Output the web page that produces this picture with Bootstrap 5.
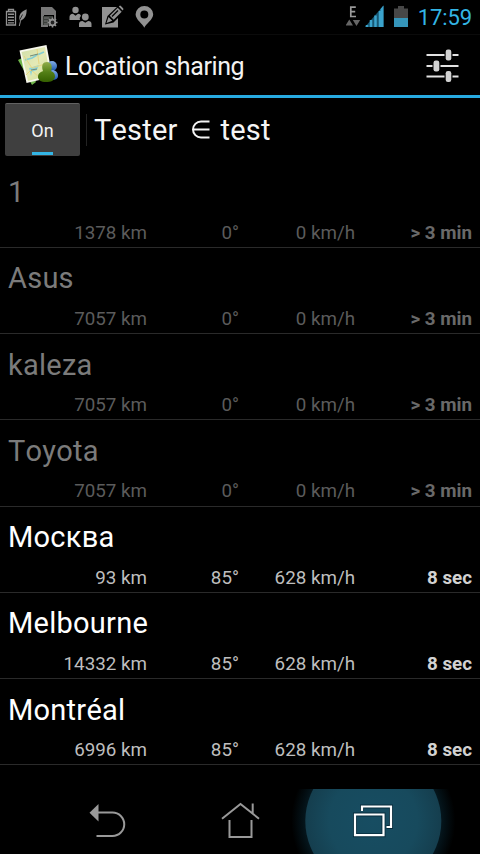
<!DOCTYPE html>
<html lang="en">
<head>
<meta charset="utf-8">
<meta name="viewport" content="width=device-width, initial-scale=1">
<title>Location sharing</title>
<link rel="stylesheet" href="https://cdn.jsdelivr.net/npm/bootstrap@5.3.0/dist/css/bootstrap.min.css">
<style>
body{background:#000;color:#f5f5f5;font-family:Roboto,"Noto Sans",sans-serif;height:854px;overflow:hidden;line-height:1;font-kerning:none}
svg{display:block;flex:none}
.status{height:35px;border-bottom:1px solid #0b0b0b}
.clock{color:#33b5e5;font-size:22px;line-height:35px;letter-spacing:-.1px}
.appbar{height:63px;border-bottom:3px solid #27aae1;padding:0 20px 0 15px}
.app-title{font-size:25px;line-height:60px;color:#f3f3f3;letter-spacing:-.4px;padding:3px 0 0 3px}
.group{height:63.6px;padding:5px 5px 5.600px}
.toggle{width:75px;height:53px;background:#3f3f3f;border:0;border-top:1px solid #626262;border-radius:2px;color:#f3f3f3;font-size:18px;line-height:51px;padding:0}
.toggle::after{content:"";display:block;width:21px;height:3px;background:#33b5e5;margin:-4px auto 0}
.rule{width:1px;height:32px;background:#232323;margin:0 7px 0 6px}
.group-name{font-size:29px;line-height:54px;white-space:pre;letter-spacing:.2px}
.person{height:86.25px;border-bottom:1px solid #2a2a2a;padding:13.500px 8px 0}
.person h2{font-size:29px;line-height:34px;font-weight:400;color:#fff;margin:0;letter-spacing:.25px}
.facts{display:grid;grid-template-columns:139px 92px 116px 117px;text-align:right;font-size:18.800px;line-height:22px;margin-top:12.500px;color:#bebebe}
.facts b{font-weight:700;color:#d2d2d2}
.stale h2{color:#7b7b7b}
.stale .facts{color:#5b5b5b}
.stale .facts b{color:#696969}
.sysnav{height:65px;margin-top:auto;overflow:hidden}
</style>
<script src="https://cdn.jsdelivr.net/npm/bootstrap@5.3.0/dist/js/bootstrap.bundle.min.js"></script>
</head>
<body class="d-flex flex-column">
<header class="status d-flex justify-content-between flex-shrink-0">
<svg width="160" height="34" viewBox="0 0 160 34" fill="#929292">
<path d="M6.500 11.500h9v13.500h-9zM8.500 9.500h5v2h-5z" fill="none" stroke="#929292" stroke-width="1.300"/>
<path d="M8 13.500h6v1.500H8zM8 16.500h6v1.500H8zM8 19.500h6v1.500H8zM8 22.300h6v1.200H8z"/>
<path d="M26.700 9.300c-6 2.400-8.500 6-7 11.200 5.500-1 6.800-5 7-11.200z"/><path d="M25 12c-3 4-4.500 8-5.700 14" fill="none" stroke="#929292"/>
<path d="M22.500 14.500l-2.500 5" stroke="#000" stroke-width=".7"/>
<path d="M41 7h11l4 4v8h-2v-4h-10v10h4v2h-7z" fill="#777"/><path d="M43 16h10v9H43z" fill="#3b3f3b"/><path d="M44 18h5M44 21h4M44 24h4" stroke="#777"/>
<circle cx="52.500" cy="22.500" r="2.800" fill="#222" stroke="#929292" stroke-width="1.800"/><path d="M52.500 17.500v2M52.500 25.500v2M47.500 22.500h2M55.500 22.500h2M49 19l1.500 1.500M54.500 24.500l1.500 1.500M49 26l1.500-1.500M54.500 20.500l1.500-1.500" stroke="#929292" stroke-width="1.600"/>
<circle cx="75.500" cy="10" r="3.200"/><path d="M69.500 20v-3q0-3 3.500-3.200l2.500 2 2.500-2q2.500 0 3 2-2 2-1 4.200z"/>
<circle cx="85.300" cy="17" r="3.400"/><path d="M79 27v-3q0-3 3.500-3l2.800 1.700 2.800-1.700q3.400 0 3.400 3v3z"/>
<path d="M102 7h16v20.500h-16z"/>
<path d="M105 24.500l2.500-8.500L119 5l6 6-11.500 11.500z" fill="#000"/>
<path d="M106.500 23l2-6 3.800 3.800zM109.700 15.700l8-8 4 4-8 8zM118.800 6.600l1.200-1.100q1 0 3.600 3.600l-1 1.500z"/>
<path d="M112 16.500l6-6" stroke="#000" stroke-width="1.200"/>
<path fill-rule="evenodd" d="M144.300 27.800c-1.500-4-8.700-8-8.700-13.500a8.800 8.300 0 0 1 17.600 0c0 5.500-7.400 9.500-8.900 13.500zm0-17.300a4 4 0 1 0 0 8 4 4 0 0 0 0-8z"/>
</svg>
<div class="d-flex pe-2">
<svg width="72" height="34" viewBox="1 0 72 34">
<path d="M10.800 7.200H5.800v9.300h5.200M5.800 11.700h4.400" fill="none" stroke="#999" stroke-width="1.700"/>
<path d="M.500 25.500h7.500L4.300 19.500zM7.800 20h7.400L11.500 26z" fill="#666"/>
<path d="M38.500 5.500V27H20z" fill="#175773"/><path d="M22 27v-2M26 27v-7M30.500 27V15.500M35 27V11" stroke="#3ba3cc" stroke-width="2.500"/><path d="M35.500 9l3-3.500V27h-3z" fill="#3ba3cc"/>
<path d="M49 8.500h4V6h6v2.500h4V18H49z" fill="#474747"/><path d="M49 18h14v9H49z" fill="#3595ba"/>
</svg>
<div class="clock">17:59</div>
</div>
</header>
<nav class="appbar d-flex align-items-center flex-shrink-0">
<svg width="43" height="44" viewBox="0 0 43 44">
<defs>
<linearGradient id="mapfill" x2="1" y2="1"><stop stop-color="#d0dea9"/><stop offset=".5" stop-color="#e5eab6"/><stop offset="1" stop-color="#cddd91"/></linearGradient>
<linearGradient id="green" x2="0" y2="1"><stop stop-color="#91ae4b"/><stop offset=".5" stop-color="#548017"/><stop offset="1" stop-color="#356000"/></linearGradient>
<linearGradient id="blue" x2="0" y2="1"><stop stop-color="#83afe7"/><stop offset="1" stop-color="#1c55aa"/></linearGradient>
</defs>
<path d="M3 17l6-3 12 25-4 3z" fill="#6fb54a"/>
<path d="M4.500 7.500L31.500 2l6 32L11.500 40z" fill="#f8f8ed"/>
<path d="M6.500 9L30 4l5 28-22 6z" fill="url(#mapfill)"/>
<path d="M10 17l7-2 5-3 7-3" fill="none" stroke="#83ced2" stroke-width="1.500"/><path d="M14 25l10-3-2 5-5 2-1 4z" fill="#93d5d6"/>
<path d="M9 13l8 12 13-4M22 6l2 15M11 32l5-5 8 7" fill="none" stroke="#e7d783" stroke-width="1"/>
<path d="M15 13l8-2M16 27l6-1" stroke="#6f8977" stroke-width="1"/>
<circle cx="37" cy="23" r="5" fill="url(#blue)"/><path d="M31 36q0-8 7-9 5 1 5 6 0 4-6 4z" fill="url(#blue)"/>
<path d="M23 34c0-4 3-5 5-6-2-6 0-9 4-9s6 4 4 9c3 1 4 3 4 6-1 4-4 5-9 5-5 0-8-2-8-5z" fill="url(#green)"/>
</svg>
<div class="app-title ms-1">Location sharing</div>
<svg class="ms-auto" width="34" height="36" viewBox="0 0 34 36">
<path d="M.500 8h18M26.500 8h6M.500 19h6M14.500 19h18M.500 29.500h18M26.500 29.500h6" stroke="#e2e2e2" stroke-width="2"/>
<g fill="#d2d2d2"><rect x="19.700" y="2.500" width="5.600" height="11" rx="2.200"/><rect x="7.500" y="13.500" width="5.800" height="11" rx="2.200"/><rect x="19.700" y="24" width="5.600" height="11" rx="2.200"/></g>
</svg>
</nav>
<section class="group d-flex align-items-center flex-shrink-0">
<button type="button" class="toggle">On</button><div class="rule"></div>
<div class="group-name d-flex align-items-center"><span>Tester</span><svg class="mx-2" width="27" height="30" viewBox="0 0 27 30"><title>∈</title><path d="M23.500 6.500h-8.500a8 8 0 0 0 0 16h8.500M7 14.500h16.500" fill="none" stroke="#f3f3f3" stroke-width="2"/></svg><span>test</span></div>
</section>
<main class="flex-shrink-0">
<article class="person stale"><h2>1</h2><div class="facts"><span>1378 km</span><span>0°</span><span>0 km/h</span><b>&gt; 3 min</b></div></article>
<article class="person stale"><h2>Asus</h2><div class="facts"><span>7057 km</span><span>0°</span><span>0 km/h</span><b>&gt; 3 min</b></div></article>
<article class="person stale"><h2>kaleza</h2><div class="facts"><span>7057 km</span><span>0°</span><span>0 km/h</span><b>&gt; 3 min</b></div></article>
<article class="person stale"><h2>Toyota</h2><div class="facts"><span>7057 km</span><span>0°</span><span>0 km/h</span><b>&gt; 3 min</b></div></article>
<article class="person"><h2>Москва</h2><div class="facts"><span>93 km</span><span>85°</span><span>628 km/h</span><b>8 sec</b></div></article>
<article class="person"><h2>Melbourne</h2><div class="facts"><span>14332 km</span><span>85°</span><span>628 km/h</span><b>8 sec</b></div></article>
<article class="person"><h2>Montréal</h2><div class="facts"><span>6996 km</span><span>85°</span><span>628 km/h</span><b>8 sec</b></div></article>
</main>
<footer class="sysnav flex-shrink-0">
<svg width="480" height="65" viewBox="0 0 480 65">
<defs><radialGradient id="halo"><stop offset=".8" stop-color="#061a22"/><stop offset=".88" stop-color="#030f14"/><stop offset="1" stop-color="#000"/></radialGradient>
<radialGradient id="disc"><stop stop-color="#174d62"/><stop offset=".65" stop-color="#174a5d"/><stop offset="1" stop-color="#153e4e"/></radialGradient></defs>
<circle cx="373.300" cy="32" r="82" fill="url(#halo)"/><circle cx="373.300" cy="32" r="68" fill="url(#disc)"/>
<path d="M97.500 23.500h15a11.700 11.700 0 0 1 0 23.500H96.500" fill="none" stroke="#999" stroke-width="2"/><path d="M89.500 23.700l9-8.700v17.500z" fill="#999"/>
<path d="M222 29.700l18.500-14.700L259 29.700M252.700 14.500V24M229.500 31v17h22V31" fill="none" stroke="#999" stroke-width="2"/>
<path d="M362 22v-4.500h29V38h-4.500M355 25.500h28.500v20.700H355z" fill="none" stroke="#082c3c" stroke-width="4"/><path d="M362 22v-4.500h29V38h-4.500M355 25.500h28.500v20.700H355z" fill="none" stroke="#fff" stroke-width="2.200"/>
</svg>
</footer>
</body>
</html>
